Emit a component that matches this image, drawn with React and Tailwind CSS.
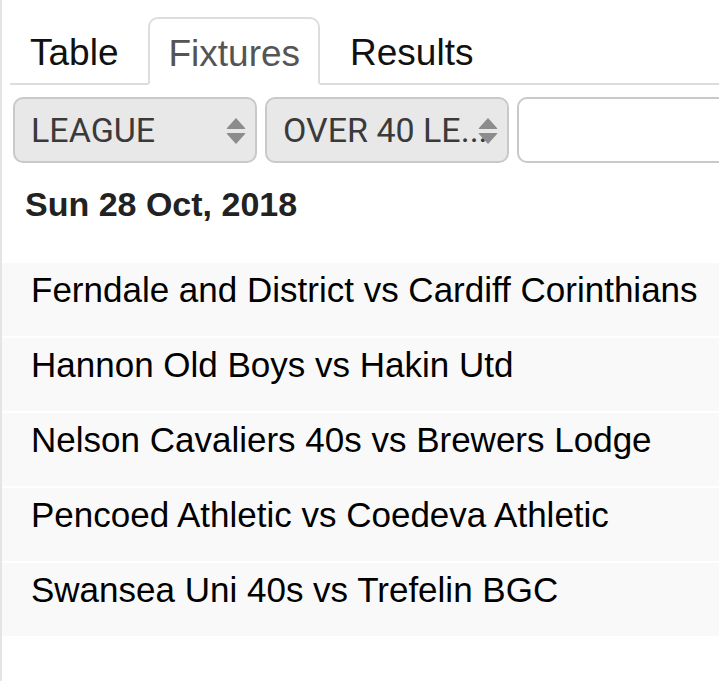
import React from "react";

const fixtures = [
  "Ferndale and District vs Cardiff Corinthians",
  "Hannon Old Boys vs Hakin Utd",
  "Nelson Cavaliers 40s vs Brewers Lodge",
  "Pencoed Athletic vs Coedeva Athletic",
  "Swansea Uni 40s vs Trefelin BGC",
];

const Arrows = () => (
  <svg width="20" height="28" viewBox="0 0 20 28" className="absolute right-[9px] top-[18px]">
    <path d="M10 1 L19 11 Q20 12 18.5 12 L1.5 12 Q0 12 1 11 Z" fill="#8c8c8c" />
    <path d="M1.5 16 L18.5 16 Q20 16 19 17 L10 27 L1 17 Q0 16 1.5 16 Z" fill="#8c8c8c" />
  </svg>
);

const Select = ({ label }) => (
  <div className="relative flex-none w-[244px] h-[66px] rounded-[10px] border-2 border-[#c9c9c9] bg-[#e8e8e8] flex items-center pl-[16px] overflow-hidden">
    <span className="text-[34px] text-[#3a3a3a] whitespace-nowrap" style={{ fontFamily: "Roboto, sans-serif" }}>
      {label}
    </span>
    <Arrows />
  </div>
);

const App = () => {
  return (
    <div
      className="min-h-screen bg-white border-l-2 border-[#e4e4e4] overflow-hidden"
      style={{ fontFamily: '"Liberation Sans", Arial, sans-serif' }}
    >
      {/* tabs */}
      <ul className="flex ml-[8px] pt-[17px] border-b-2 border-[#dddddd]">
        <li className="h-[66px] px-[18px] pt-[6px] mr-[10px] border-2 border-transparent flex items-center text-[37px] text-[#111] -mb-[2px]">
          Table
        </li>
        <li className="h-[68px] px-[18px] pt-[6px] mr-[10px] border-2 border-b-white border-[#dddddd] rounded-t-[10px] bg-white flex items-center text-[37px] text-[#555] -mb-[2px]">
          Fixtures
        </li>
        <li className="h-[66px] px-[18px] pt-[6px] border-2 border-transparent flex items-center text-[37px] text-[#111] -mb-[2px]">
          Results
        </li>
      </ul>

      {/* filters */}
      <div className="flex gap-[8px] pl-[11px] mt-[12px]">
        <Select label="LEAGUE" />
        <Select label="OVER 40 LE..." />
        <div className="flex-none w-[244px] h-[66px] rounded-[10px] border-2 border-[#c9c9c9] bg-white" />
      </div>

      {/* date */}
      <div className="mt-[21px] pl-[23px] h-[40px] leading-[40px] text-[34px] font-bold text-[#222]">
        Sun 28 Oct, 2018
      </div>

      {/* fixtures list */}
      <div className="mt-[39px] flex flex-col gap-[2px]">
        {fixtures.map((f) => (
          <div key={f} className="h-[73px] bg-[#f9f9f9] pl-[29px] pt-[7px]">
            <div className="text-[35px] leading-[40px] text-black whitespace-nowrap">{f}</div>
          </div>
        ))}
      </div>
    </div>
  );
};

export default App;
